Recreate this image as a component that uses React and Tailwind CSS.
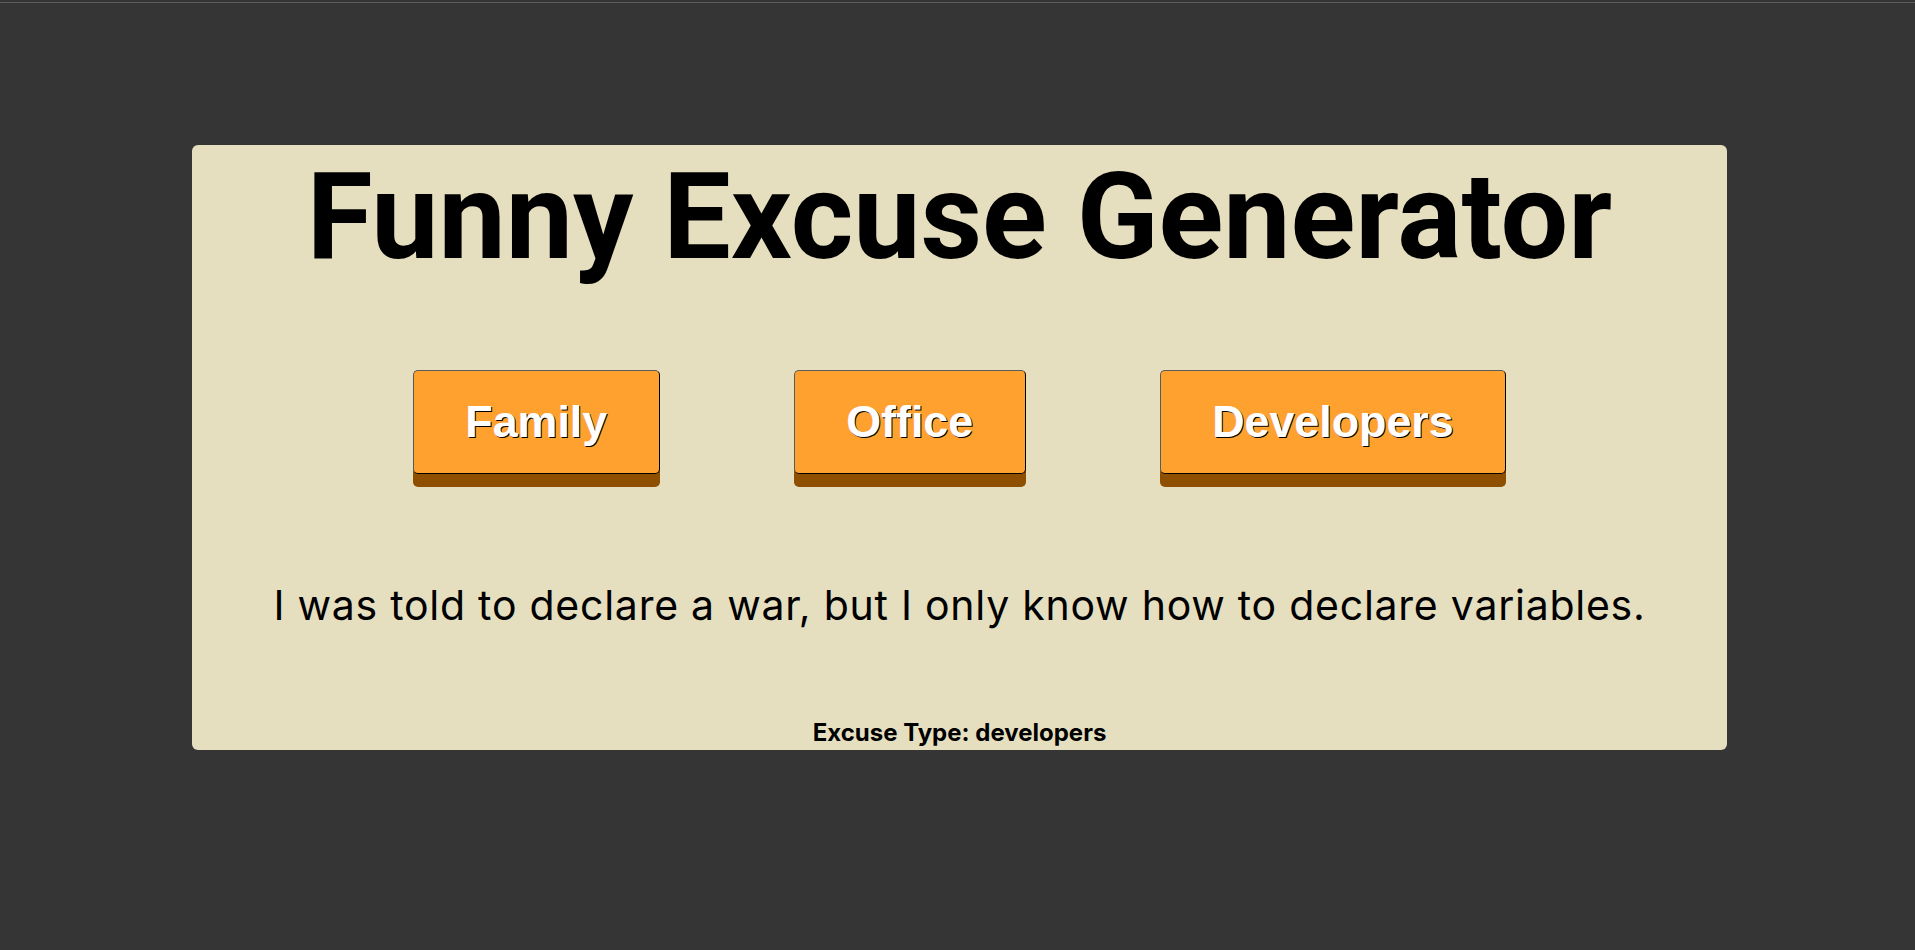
import React, { useState } from 'react';

const excuses = {
    family: 'My grandma ate my homework, then asked for seconds.',
    office: 'The printer and I had a disagreement, and it won.',
    developers: 'I was told to declare a war, but I only know how to declare variables.',
};

function ExcuseButton({ label, onClick }) {
    return (
        <button
            onClick={onClick}
            className="h-[104px] px-[51.5px] flex items-center justify-center bg-[#ffa12f] rounded-[5px] border border-t-[#5a5a5a] border-l-[#5a5a5a] border-r-black border-b-black shadow-[0_13px_0_#8f4f00] text-white font-bold text-[44.8px] [font-family:'Liberation_Sans',Arial,sans-serif] [text-shadow:1px_1px_0_#000]"
        >
            {label}
        </button>
    );
}

export default function App() {
    const [type, setType] = useState('developers');

    return (
        <div className="min-h-screen bg-[#353535] overflow-hidden">
            <div className="mt-[2px] h-px bg-[#5c5c5c]"></div>
            <div className="w-[1535px] h-[605px] ml-[192px] mt-[142px] bg-[#e5dfc0] rounded-[6px] flex flex-col items-center">
                <h1 className="mt-[12px] text-[120px] leading-[120px] font-bold text-black [font-family:Roboto,sans-serif]">
                    Funny Excuse Generator
                </h1>

                <div className="mt-[93px] flex gap-[134px]">
                    <ExcuseButton label="Family" onClick={() => setType('family')} />
                    <ExcuseButton label="Office" onClick={() => setType('office')} />
                    <ExcuseButton label="Developers" onClick={() => setType('developers')} />
                </div>

                <p className="mt-[111px] text-[41px] leading-[41px] tracking-[0.75px] text-black [font-family:Inter,sans-serif]">
                    {excuses[type]}
                </p>

                <p className="mt-[95px] text-[24px] leading-[24px] font-bold text-black [font-family:Inter,sans-serif]">
                    Excuse Type: {type}
                </p>
            </div>
        </div>
    );
}
